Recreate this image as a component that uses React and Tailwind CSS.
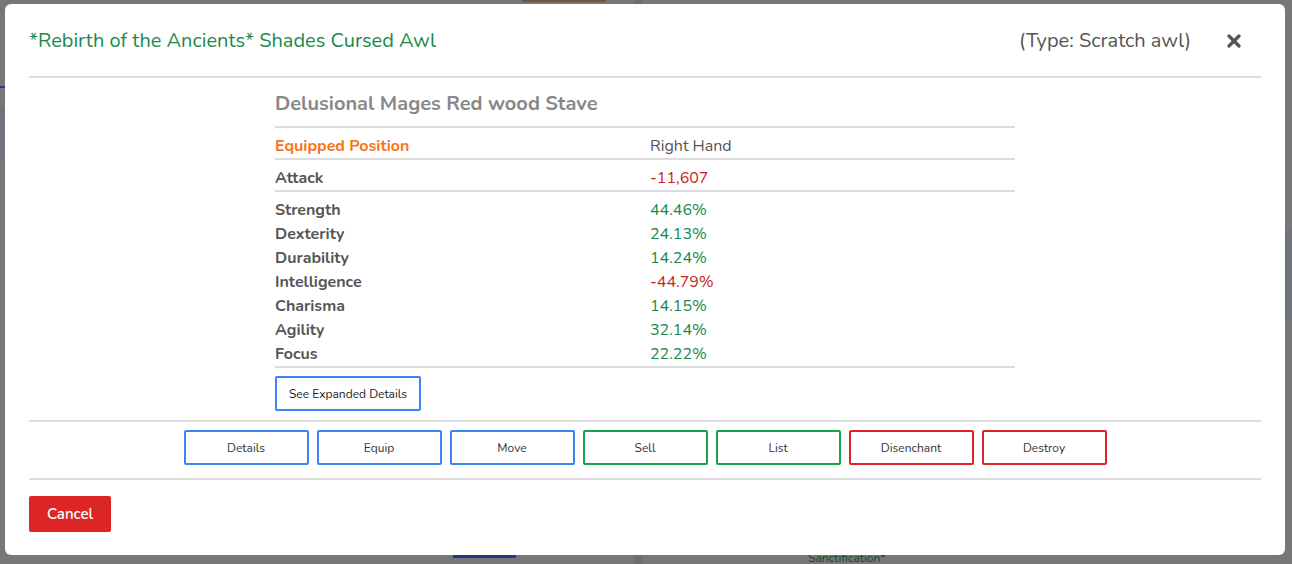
import React from 'react';

const stats = [
    { label: 'Strength', value: '44.46%', good: true },
    { label: 'Dexterity', value: '24.13%', good: true },
    { label: 'Durability', value: '14.24%', good: true },
    { label: 'Intelligence', value: '-44.79%', good: false },
    { label: 'Charisma', value: '14.15%', good: true },
    { label: 'Agility', value: '32.14%', good: true },
    { label: 'Focus', value: '22.22%', good: true },
];

const actions = [
    { label: 'Details', tone: 'border-[#3b82f6]' },
    { label: 'Equip', tone: 'border-[#3b82f6]' },
    { label: 'Move', tone: 'border-[#3b82f6]' },
    { label: 'Sell', tone: 'border-[#16a34a]' },
    { label: 'List', tone: 'border-[#16a34a]' },
    { label: 'Disenchant', tone: 'border-[#dc2626]' },
    { label: 'Destroy', tone: 'border-[#dc2626]' },
];

function Backdrop() {
    return (
        <div className="absolute inset-0 bg-[#777777] overflow-hidden">
            <div className="absolute left-0 top-[86px] w-[5px] h-[2px] bg-[#1e3a8a]" />
            <div className="absolute left-[634px] top-0 w-[8px] h-[564px] bg-[#6e6e6e]" />
            <div className="absolute left-[522px] top-0 w-[84px] h-[2px] bg-[#74503f]" />
            <div className="absolute left-[453px] top-[555px] w-[63px] h-[3px] bg-[#1e3a8a]" />
            <div className="absolute left-[808px] top-[551px] text-[12px] leading-[14px] text-[#0f4d2a]">Sanctification*</div>
            <div className="absolute left-[1285px] top-[230px] w-[7px] h-[90px] bg-[#6f737a]" />
            <div className="absolute left-0 top-[108px] w-[5px] h-[52px] bg-[#6f737a]" />
        </div>
    );
}

export default function App() {
    return (
        <div className="relative w-[1292px] h-[564px] overflow-hidden" style={{ fontFamily: 'Nunito, Lato, "Noto Sans", sans-serif' }}>
            <Backdrop />
            <div className="relative pt-[4px] pl-[5px] pr-[7px]">
                <div className="bg-white rounded-[6px] h-[551px] flex flex-col">
                    <div className="h-[72px] flex items-center pl-6 pr-[44px] pt-[2px]">
                        <h1 className="text-[20px] text-[#1a8a4a]">*Rebirth of the Ancients* Shades Cursed Awl</h1>
                        <div className="flex-1" />
                        <span className="text-[20px] text-[#555555]">(Type: Scratch awl)</span>
                        <svg className="ml-[36px]" width="14" height="14" viewBox="0 0 14 14">
                            <path d="M2 2 L12 12 M12 2 L2 12" stroke="#555555" strokeWidth="3.2" strokeLinecap="round" />
                        </svg>
                    </div>
                    <div className="mx-6 h-[2px] bg-[#dddddd]" />

                    <div className="w-[740px] mx-auto pt-[13px]">
                        <h2 className="text-[20px] font-bold text-[#888888] leading-[26px]">Delusional Mages Red wood Stave</h2>
                        <div className="mt-[9px] h-[2px] bg-[#dddddd]" />
                        <div className="h-[30px] grid grid-cols-[375px_1fr] items-center text-[16px] pt-[5px]">
                            <span className="font-bold text-[#f97316]">Equipped Position</span>
                            <span className="text-[#555555]">Right Hand</span>
                        </div>
                        <div className="h-[2px] bg-[#dddddd]" />
                        <div className="h-[30px] grid grid-cols-[375px_1fr] items-center text-[16px] pt-[5px]">
                            <span className="font-bold text-[#555555]">Attack</span>
                            <span className="text-[#c81e1e]">-11,607</span>
                        </div>
                        <div className="h-[2px] bg-[#dddddd]" />
                        <div className="pt-[6px]">
                            {stats.map((s) => (
                                <div key={s.label} className="grid grid-cols-[375px_1fr] text-[16px] leading-[24px]">
                                    <span className="font-bold text-[#555555]">{s.label}</span>
                                    <span className={s.good ? 'text-[#1a8a4a]' : 'text-[#c81e1e]'}>{s.value}</span>
                                </div>
                            ))}
                        </div>
                        <div className="h-[2px] bg-[#dddddd]" />
                        <button className="mt-[8px] w-[146px] h-[35px] border-2 border-[#3b82f6] rounded-[2px] text-[12px] text-[#222222]">
                            See Expanded Details
                        </button>
                    </div>

                    <div className="mt-[9px] mx-6 h-[2px] bg-[#dddddd]" />
                    <div className="pt-[8px] pb-[13px] flex justify-center gap-2">
                        {actions.map((a) => (
                            <button key={a.label} className={`w-[125px] h-[35px] border-2 rounded-[2px] text-[12px] text-[#333333] ${a.tone}`}>
                                {a.label}
                            </button>
                        ))}
                    </div>
                    <div className="mx-6 h-[2px] bg-[#dddddd]" />
                    <div className="pt-[16px] px-6">
                        <button className="w-[82px] h-[36px] bg-[#dc2626] rounded-[2px] text-white text-[15px] font-semibold">Cancel</button>
                    </div>
                </div>
            </div>
        </div>
    );
}
